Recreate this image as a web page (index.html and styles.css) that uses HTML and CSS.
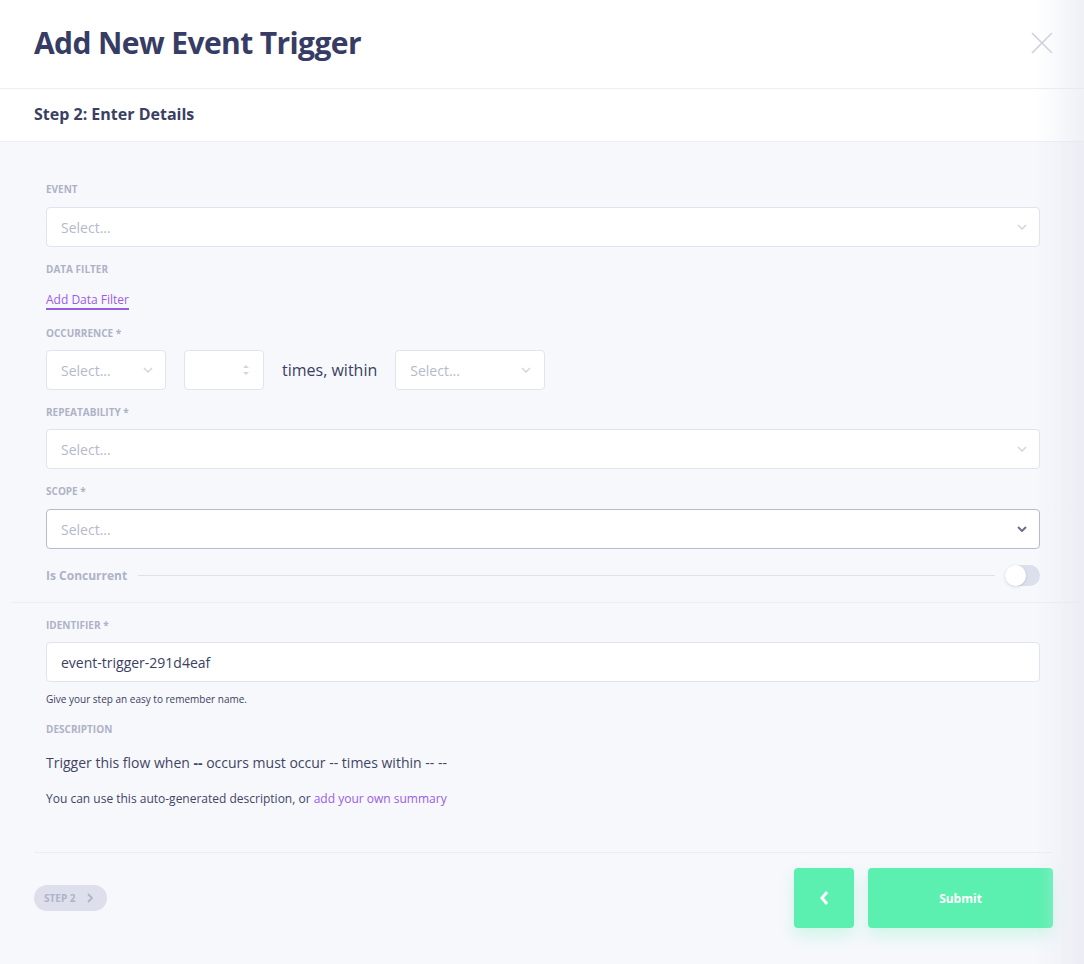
FILE: index.html
```html
<!DOCTYPE html>
<html>
<head>
<meta charset="utf-8">
<link rel="stylesheet" href="styles.css">
</head>
<body>
<div class="modal">
  <header class="head">
    <h1 class="title">Add New Event Trigger</h1>
    <button class="close" aria-label="Close">
      <svg width="24" height="24" viewBox="0 0 24 24"><path d="M2 2L22 22M22 2L2 22" stroke="#cdd0dc" stroke-width="1.6" fill="none"/></svg>
    </button>
  </header>
  <div class="step-head">Step 2: Enter Details</div>
  <main class="form">
    <div class="section">
      <div class="label">Event</div>
      <div class="select full"><span class="ph">Select...</span><svg class="chev" width="10" height="6" viewBox="0 0 10 6"><path d="M1 1L5 5L9 1" stroke="#d3d6e2" stroke-width="1.5" fill="none"/></svg></div>

      <div class="label mt">Data Filter</div>
      <a class="link-filter">Add Data Filter</a>

      <div class="label mt2 tight">Occurrence *</div>
      <div class="occ-row">
        <div class="select w120"><span class="ph">Select...</span><svg class="chev" width="10" height="6" viewBox="0 0 10 6"><path d="M1 1L5 5L9 1" stroke="#d3d6e2" stroke-width="1.5" fill="none"/></svg></div>
        <div class="select w80 num"><svg class="spin" width="8" height="14" viewBox="0 0 8 14"><path d="M1 5L4 2L7 5Z M1 9L4 12L7 9Z" fill="#d3d6e2"/></svg></div>
        <span class="within">times, within</span>
        <div class="select w150"><span class="ph">Select...</span><svg class="chev" width="10" height="6" viewBox="0 0 10 6"><path d="M1 1L5 5L9 1" stroke="#d3d6e2" stroke-width="1.5" fill="none"/></svg></div>
      </div>

      <div class="label mt tight">Repeatability *</div>
      <div class="select full"><span class="ph">Select...</span><svg class="chev" width="10" height="6" viewBox="0 0 10 6"><path d="M1 1L5 5L9 1" stroke="#d3d6e2" stroke-width="1.5" fill="none"/></svg></div>

      <div class="label mt">Scope *</div>
      <div class="select full focus"><span class="ph">Select...</span><svg class="chev" width="10" height="6" viewBox="0 0 10 6"><path d="M1 1L5 5L9 1" stroke="#6b6f87" stroke-width="2" fill="none"/></svg></div>

      <div class="concurrent">
        <span class="conc-label">Is Concurrent</span>
        <span class="conc-line"></span>
        <span class="toggle"><span class="knob"></span></span>
      </div>
    </div>

    <div class="divider"></div>

    <div class="section">
      <div class="label mt3 tight">Identifier *</div>
      <div class="select full"><span class="val">event-trigger-291d4eaf</span></div>
      <div class="help">Give your step an easy to remember name.</div>

      <div class="label mt4">Description</div>
      <p class="desc">Trigger this flow when <b>--</b> occurs must occur -- times within -- --</p>
      <p class="note">You can use this auto-generated description, or <a class="link">add your own summary</a></p>
    </div>

    <footer class="foot">
      <span class="pill">STEP 2 <svg width="6" height="10" viewBox="0 0 6 10"><path d="M1 1L5 5L1 9" stroke="#aeb3c8" stroke-width="1.8" fill="none"/></svg></span>
      <div class="btns">
        <button class="btn back"><svg width="10" height="16" viewBox="0 0 10 16"><path d="M8 2L3 8L8 14" stroke="#fff" stroke-width="3" fill="none"/></svg></button>
        <button class="btn submit">Submit</button>
      </div>
    </footer>
  </main>
</div>
<div class="edge"></div>
</body>
</html>
```

FILE: styles.css
```css
* { box-sizing: border-box; }
html, body { margin: 0; padding: 0; }
body {
  font-family: "Open Sans", "Noto Sans", sans-serif;
  background: #f7f8fc;
  color: #3a4063;
  width: 1084px;
  min-height: 964px;
}
.modal { background: #f7f8fc; min-height: 964px; }
.head {
  background: #fff;
  height: 89px;
  border-bottom: 1px solid #eceef4;
  display: flex;
  align-items: center;
  justify-content: space-between;
  padding: 0 30px 0 34px;
}
.title {
  margin: 0;
  font-size: 30px;
  font-weight: 700;
  color: #363c63;
  letter-spacing: -0.6px;
  padding-bottom: 3px;
}
.close {
  background: none;
  border: 0;
  padding: 0;
  width: 24px;
  height: 24px;
  margin-top: -3px;
}
.step-head {
  background: #fff;
  height: 53px;
  border-bottom: 1px solid #eceef4;
  display: flex;
  align-items: center;
  padding: 0 34px 2px;
  font-size: 16px;
  font-weight: 700;
  color: #3a4063;
}
.form { padding: 0; }
.section { padding: 0 44px 0 46px; }
.section:first-child { padding-top: 40px; }
.label {
  font-size: 10px;
  line-height: 14px;
  font-weight: 700;
  text-transform: uppercase;
  color: #aeb2c6;
  margin-bottom: 11px;
}
.label.tight { margin-bottom: 10px; }
.mt { margin-top: 15px; }
.mt2 { margin-top: 16px; }
.mt3 { margin-top: 15px; }
.mt4 { margin-top: 16px; }
.select {
  height: 40px;
  background: #fff;
  border: 1px solid #e1e3ef;
  border-radius: 4px;
  display: flex;
  align-items: center;
  justify-content: space-between;
  padding: 0 12px 0 14px;
}
.select.full { width: 100%; }
.select.focus { border-color: #b7bbcd; }
.ph { font-size: 14px; color: #b5b9ca; }
.val { font-size: 14px; color: #3a4063; }
.chev { flex: none; }
.link-filter {
  display: inline-block;
  font-size: 12px;
  line-height: 16px;
  color: #9a5ce6;
  border-bottom: 2px solid #9a5ce6;
  margin-bottom: 0;
}
.occ-row {
  display: flex;
  align-items: center;
  height: 40px;
}
.w120 { width: 120px; }
.w80 { width: 80px; margin-left: 18px; justify-content: flex-end; padding-right: 13px; }
.w150 { width: 150px; padding-right: 13px; }
.within {
  font-size: 16px;
  color: #3a4063;
  margin: 0 18px 0 18px;
}
.concurrent {
  display: flex;
  align-items: center;
  height: 21px;
  margin-top: 16px;
}
.conc-label {
  font-size: 12px;
  font-weight: 700;
  color: #aeb2c6;
}
.conc-line {
  flex: 1;
  height: 1px;
  background: #dfe1ea;
  margin: 0 10px 0 11px;
}
.toggle {
  width: 35px;
  height: 21px;
  border-radius: 11px;
  background: #dcdfec;
  position: relative;
  flex: none;
}
.knob {
  position: absolute;
  left: 0;
  top: 0;
  width: 21px;
  height: 21px;
  border-radius: 50%;
  background: #fff;
  box-shadow: 0 1px 3px rgba(60, 70, 110, 0.18);
}
.divider {
  height: 1px;
  background: #eceef4;
  margin: 16px 6px 0 10px;
}
.help {
  font-size: 10px;
  line-height: 14px;
  color: #3a4063;
  margin-top: 10px;
}
.desc {
  margin: 17px 0 0;
  font-size: 14px;
  line-height: 20px;
  color: #3f4565;
}
.desc b { font-weight: 700; }
.note {
  margin: 18px 0 0;
  font-size: 12px;
  line-height: 16px;
  color: #3f4565;
}
.link { color: #9a5ce6; }
.foot {
  margin: 45px 31px 0 34px;
  border-top: 1px solid #eceef4;
  padding-top: 15px;
  display: flex;
  align-items: center;
  justify-content: space-between;
}
.pill {
  display: inline-flex;
  align-items: center;
  gap: 11px;
  height: 26px;
  padding: 0 14px 0 10px;
  border-radius: 13px;
  background: #dde0ec;
  color: #aeb3c8;
  font-size: 10px;
  font-weight: 700;
}
.btns { display: flex; gap: 14px; }
.btn {
  border: 0;
  height: 60px;
  border-radius: 4px;
  background: #5cf0b0;
  color: #fff;
  font-family: inherit;
  font-weight: 700;
  font-size: 12px;
  box-shadow: 0 8px 16px rgba(92, 240, 176, 0.25);
  display: flex;
  align-items: center;
  justify-content: center;
}
.back { width: 60px; }
.submit { width: 185px; }
.edge {
  position: fixed;
  top: 0;
  right: 0;
  width: 46px;
  height: 100%;
  background: linear-gradient(to right, rgba(230, 232, 240, 0), rgba(225, 228, 238, 0.55));
  pointer-events: none;
}
```
